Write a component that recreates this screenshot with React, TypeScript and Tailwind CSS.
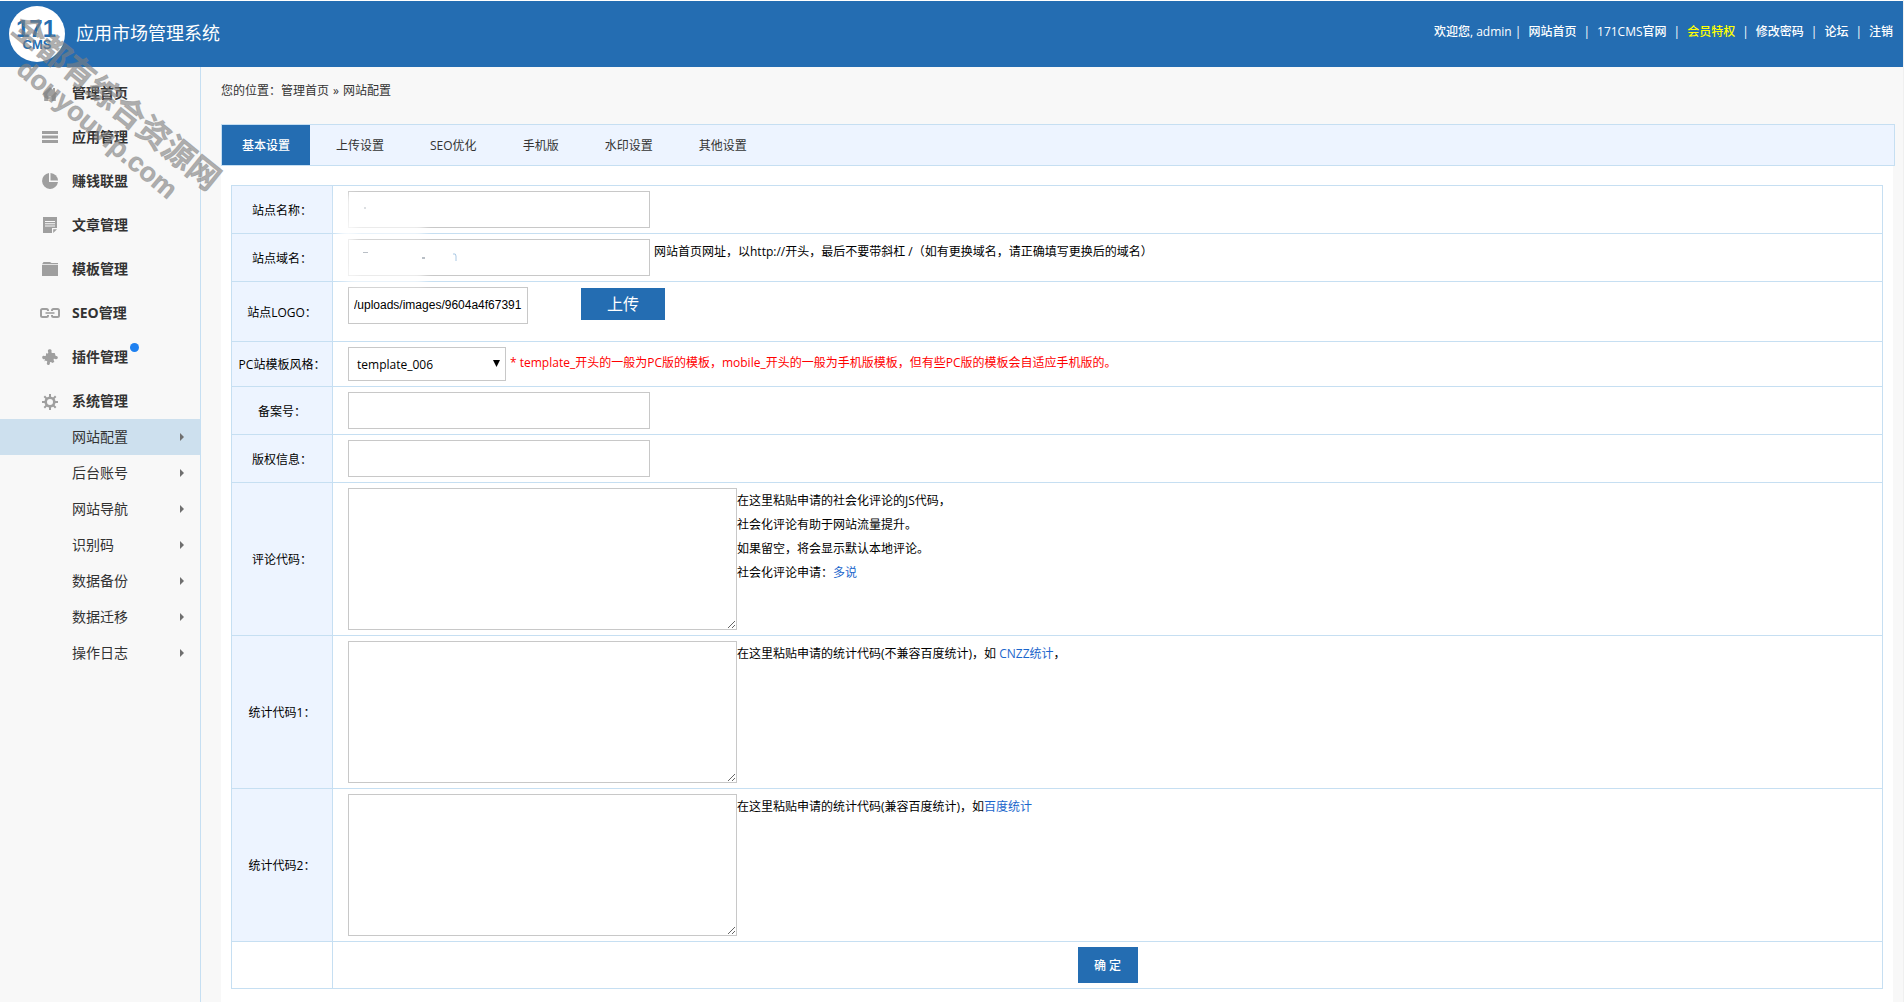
import { clsx } from 'clsx';
import { useState } from 'react';
import type { ReactNode } from 'react';

type MenuItem = {
    label: string;
    icon: ReactNode;
    badge?: boolean;
};

const HomeIcon = () => (
    <svg width="16" height="16" viewBox="0 0 16 16" fill="currentColor">
        <path d="M8 2 0 9.500h2.200V16h4.300v-4.500h3V16h4.300V9.500H16L13 6.700V3h-2v1.800z" />
    </svg>
);

const ListIcon = () => (
    <svg width="16" height="12" viewBox="0 0 16 12" fill="currentColor">
        <path d="M0 0h16v3H0zM0 4.500h16v3H0zM0 9h16v3H0z" />
    </svg>
);

const PieIcon = () => (
    <svg width="16" height="16" viewBox="0 0 16 16" fill="currentColor">
        <path d="M7 0a8 8 0 1 0 9 9H7z" />
        <path d="M8.500 0v7.500H16A8 8 0 0 0 8.500 0z" />
    </svg>
);

const NoteIcon = () => (
    <svg width="14" height="16" viewBox="0 0 14 16" fill="currentColor">
        <path
            fillRule="evenodd"
            d="M0 0h14v11H9v5H0zM2 4v1h10V4zM2 6.200v1h10v-1zM2 8.500v1h10v-1z"
        />
        <path d="M10.200 12.200H14L10.200 16z" />
    </svg>
);

const FolderIcon = () => (
    <svg width="16" height="14" viewBox="0 0 16 14" fill="currentColor">
        <path d="M0 2.200 1.500 0H8l1.500 1H16v1.200z" />
        <path d="M0 3h16v11H0z" />
    </svg>
);

const LinkIcon = () => (
    <svg
        width="20"
        height="10"
        viewBox="0 0 20 10"
        fill="none"
        stroke="currentColor"
        strokeWidth="2"
    >
        <path d="M8 3V2.500Q8 1 6.500 1h-4Q1 1 1 2.500v5Q1 9 2.500 9h4Q8 9 8 7.500V7M12 3V2.500Q12 1 13.500 1h4Q19 1 19 2.500v5Q19 9 17.500 9h-4Q12 9 12 7.500V7" />
        <path d="M5.500 5h9" strokeWidth="1.600" />
    </svg>
);

const PuzzleIcon = () => (
    <svg width="16" height="16" viewBox="0 0 16 16" fill="currentColor">
        <path d="M4 4.300c1 .3 2 .2 2.200-.4C6.400 3 5.600 2.300 6 1.300 6.500 0 9 0 9.500 1.300c.3.900-.3 1.600 0 2.200.5.700 1.800.6 3.200.5l1 3c.8-.3 1.700 0 2 .9.400 1.200-.5 2.600-1.900 2.300-.9-.2-1.300-.8-1.900-.4-.6.500-.1 1.700.5 3.300l-2.300 1c-.6-1.200-1.500-1.300-2-.8-.6.600.2 1.500-.6 2.300-1 .9-2.600.3-2.700-1 0-.9.700-1.500.4-2.200-.3-.6-1.200-.7-2.400-.5L2.300 13 3 9.900c-.7 0-1.300.6-2 .1C-.3 9.200 0 7 1.600 6.800c.9-.1 1.500.5 2 .2.500-.4.500-1.500.4-2.700z" />
    </svg>
);

const GearIcon = () => (
    <svg
        width="16"
        height="18"
        viewBox="0 -2 16 18"
        fill="none"
        stroke="currentColor"
    >
        <circle cx="8" cy="8" r="4.300" strokeWidth="2.600" />
        <path
            d="M8 0v3M8 13v3M0 8h3M13 8h3M2.300 2.300l2.300 2.300M11.400 11.400l2.300 2.300M2.300 13.700l2.300-2.300M11.400 4.600l2.300-2.300"
            strokeWidth="2"
        />
    </svg>
);

const menuItems: MenuItem[] = [
    { label: '管理首页', icon: <HomeIcon /> },
    { label: '应用管理', icon: <ListIcon /> },
    { label: '赚钱联盟', icon: <PieIcon /> },
    { label: '文章管理', icon: <NoteIcon /> },
    { label: '模板管理', icon: <FolderIcon /> },
    { label: 'SEO管理', icon: <LinkIcon /> },
    { label: '插件管理', icon: <PuzzleIcon />, badge: true },
    { label: '系统管理', icon: <GearIcon /> },
];

const subItems = [
    '网站配置',
    '后台账号',
    '网站导航',
    '识别码',
    '数据备份',
    '数据迁移',
    '操作日志',
];

const topLinks = [
    '网站首页',
    '171CMS官网',
    '会员特权',
    '修改密码',
    '论坛',
    '注销',
];

const tabs = [
    '基本设置',
    '上传设置',
    'SEO优化',
    '手机版',
    '水印设置',
    '其他设置',
];

const inputClass = 'h-[37px] border border-[#c8c8c8] bg-white px-[5px]';

function Logo() {
    return (
        <svg width="56" height="56" viewBox="0 0 56 56" className="shrink-0">
            <circle cx="28" cy="28" r="28" fill="#fff" />
            <g
                fill="#246db2"
                textAnchor="middle"
                fontFamily="'Liberation Sans', sans-serif"
                fontWeight="bold"
            >
                <text
                    x="27"
                    y="31"
                    fontSize="24"
                    fontFamily="'Liberation Sans Narrow', 'Liberation Sans', sans-serif"
                >
                    171
                </text>
                <text x="28" y="43" fontSize="13">
                    CMS
                </text>
            </g>
        </svg>
    );
}

function Watermark() {
    return (
        <svg
            width="240"
            height="210"
            viewBox="0 0 240 210"
            className="pointer-events-none absolute top-0 left-0"
            fill="#808080"
            fillOpacity="0.65"
            stroke="#808080"
            strokeOpacity="0.3"
            strokeWidth="0.800"
            fontWeight="bold"
        >
            <text
                transform="translate(10 31) rotate(39)"
                fontSize="32"
                fontFamily="'Noto Sans CJK SC', sans-serif"
            >
                全都有综合资源网
            </text>
            <text
                transform="translate(15 72) rotate(40)"
                fontSize="27"
                fontFamily="'Liberation Sans', sans-serif"
            >
                douyouvip.com
            </text>
        </svg>
    );
}

function Header() {
    return (
        <header className="flex h-[66px] items-center bg-[#246db2] pr-2.5 pl-[9px] text-white">
            <Logo />
            <h1 className="ml-[11px] pb-0.5 text-[18px]">应用市场管理系统</h1>
            <nav className="ml-auto flex items-center gap-[7px] pb-1 font-medium">
                <span>欢迎您, admin |</span>
                {topLinks.map((link, i) => (
                    <span key={link} className="flex gap-[7px]">
                        {i > 0 && <span>|</span>}
                        <a
                            href="#"
                            className={clsx(link === '会员特权' && 'text-[#ffff00]')}
                        >
                            {link}
                        </a>
                    </span>
                ))}
            </nav>
        </header>
    );
}

function Sidebar() {
    return (
        <aside className="w-[201px] shrink-0 border-r border-[#c6dff2] text-sm text-[#333]">
            {menuItems.map((item) => (
                <a
                    key={item.label}
                    href="#"
                    className="flex h-11 items-center pt-2 pl-10 font-bold"
                >
                    <span className="flex w-5 justify-center text-[#9f9f9f]">
                        {item.icon}
                    </span>
                    <span className="relative ml-3">
                        {item.label}
                        {item.badge && (
                            <span className="absolute -top-1 -right-[11px] h-[9px] w-[9px] rounded-full bg-[#1e80f0]" />
                        )}
                    </span>
                </a>
            ))}
            {subItems.map((item, i) => (
                <a
                    key={item}
                    href="#"
                    className={clsx(
                        'flex h-9 items-center justify-between pr-4 pl-[72px]',
                        i === 0 && 'bg-[#cde0ee]',
                    )}
                >
                    {item}
                    <svg width="4" height="8" viewBox="0 0 4 8" fill="#6f6f6f">
                        <path d="M0 0l4 4-4 4z" />
                    </svg>
                </a>
            ))}
        </aside>
    );
}

function Row({
    label,
    htmlFor,
    className = 'pb-[5px] pl-[15px]',
    children,
}: {
    label?: string;
    htmlFor?: string;
    className?: string;
    children: ReactNode;
}) {
    return (
        <div className="flex border-t border-[#c6dff2]">
            <div
                className={clsx(
                    'flex w-[101px] shrink-0 items-center justify-center border-r border-[#c6dff2] pt-0.5',
                    label && 'bg-[#edf4ff]',
                )}
            >
                {label && <label htmlFor={htmlFor}>{label}</label>}
            </div>
            <div className={clsx('flex flex-1 items-start pt-[5px]', className)}>
                {children}
            </div>
        </div>
    );
}

function CodeRow({
    label,
    id,
    children,
}: {
    label: string;
    id: string;
    children: ReactNode;
}) {
    return (
        <Row label={label} htmlFor={id}>
            <textarea
                id={id}
                className="h-[142px] w-[389px] resize border border-[#c8c8c8] bg-white p-[5px]"
            />
            <div className="pt-px leading-6">{children}</div>
        </Row>
    );
}

// Soft smear over the site name and domain, with the specks left under it
function Smudge() {
    return (
        <svg
            width="140"
            height="110"
            viewBox="0 0 140 110"
            className="pointer-events-none absolute top-0 left-[92px]"
        >
            <filter id="soft" x="-50%" y="-50%" width="200%" height="200%">
                <feGaussianBlur stdDeviation="4" />
            </filter>
            <g fill="#fff" fillOpacity="0.75" filter="url(#soft)">
                <rect x="14" y="10" width="16" height="84" />
                <rect x="24" y="38" width="76" height="14" />
                <rect x="24" y="86" width="76" height="14" />
            </g>
            <g fill="#8a94a0" fillOpacity="0.6">
                <rect x="40" y="22" width="2" height="2" fillOpacity="0.3" />
                <rect x="39" y="67" width="5" height="1" />
                <rect x="98" y="72" width="3" height="2" />
            </g>
            <path d="M129 69q3-1 3 2v5" fill="none" stroke="#a9c8e4" />
        </svg>
    );
}

function SettingsForm() {
    return (
        <form className="relative border-x border-b border-[#c6dff2]">
            <Row label="站点名称：" htmlFor="site-name">
                <input id="site-name" type="text" className={clsx(inputClass, 'w-[302px]')} />
            </Row>
            <Row label="站点域名：" htmlFor="site-url">
                <input id="site-url" type="text" className={clsx(inputClass, 'w-[302px]')} />
                <p className="ml-1 pt-px leading-6">
                    网站首页网址，以http://开头，最后不要带斜杠 /（如有更换域名，请正确填写更换后的域名）
                </p>
            </Row>
            <Row label="站点LOGO：" htmlFor="site-logo" className="pb-[17px] pl-[15px]">
                <input
                    id="site-logo"
                    type="text"
                    defaultValue="/uploads/images/9604a4f67391"
                    className={clsx(
                        inputClass,
                        "w-[180px] pb-0.5 font-['Liberation_Sans',sans-serif]",
                    )}
                />
                <button
                    type="button"
                    className="mt-px ml-[53px] h-8 w-[84px] bg-[#246db2] text-base text-white"
                >
                    上传
                </button>
            </Row>
            <Row label="PC站模板风格：" htmlFor="template">
                <div className="relative">
                    <select
                        id="template"
                        className="h-[34px] w-[158px] appearance-none border border-[#c8c8c8] bg-white px-2 pt-0.5"
                    >
                        <option>template_006</option>
                    </select>
                    <svg
                        width="7"
                        height="7"
                        viewBox="0 0 7 7"
                        className="pointer-events-none absolute top-[13px] right-[6px]"
                    >
                        <path d="M0 0h7L3.500 7z" />
                    </svg>
                </div>
                <p className="ml-1 leading-8 text-[#ff0000]">
                    * template_开头的一般为PC版的模板，mobile_开头的一般为手机版模板，但有些PC版的模板会自适应手机版的。
                </p>
            </Row>
            <Row label="备案号：" htmlFor="icp">
                <input id="icp" type="text" className={clsx(inputClass, 'w-[302px]')} />
            </Row>
            <Row label="版权信息：" htmlFor="copyright">
                <input id="copyright" type="text" className={clsx(inputClass, 'w-[302px]')} />
            </Row>
            <CodeRow label="评论代码：" id="comment-code">
                <p>在这里粘贴申请的社会化评论的JS代码，</p>
                <p>社会化评论有助于网站流量提升。</p>
                <p>如果留空，将会显示默认本地评论。</p>
                <p>
                    社会化评论申请：
                    <a href="#" className="text-[#1a66cc]">
                        多说
                    </a>
                </p>
            </CodeRow>
            <CodeRow label="统计代码1：" id="stats-code-1">
                在这里粘贴申请的统计代码(不兼容百度统计)，如{' '}
                <a href="#" className="text-[#1a66cc]">
                    CNZZ统计
                </a>
                ，
            </CodeRow>
            <CodeRow label="统计代码2：" id="stats-code-2">
                在这里粘贴申请的统计代码(兼容百度统计)，如
                <a href="#" className="text-[#1a66cc]">
                    百度统计
                </a>
            </CodeRow>
            <Row className="justify-center pb-[5px]">
                <button
                    type="submit"
                    className="h-9 w-[60px] bg-[#246db2] pt-0.5 font-medium text-white"
                >
                    确 定
                </button>
            </Row>
            <Smudge />
        </form>
    );
}

export default function App() {
    const [activeTab, setActiveTab] = useState(tabs[0]);

    return (
        <div className="relative flex min-h-screen flex-col border-r border-[#f0f0f0] bg-[#f8f8f8] font-['Open_Sans','Noto_Sans_CJK_SC',sans-serif] text-xs text-black">
            <div className="h-px bg-white" />
            <Header />
            <div className="flex flex-1">
                <Sidebar />
                <main className="mr-2 ml-5 flex min-w-0 flex-1 flex-col">
                    <p className="pt-3 pb-[21px] leading-6 text-[#333]">
                        您的位置：<a href="#">管理首页</a>
                        <span className="mx-1">»</span>
                        <a href="#">网站配置</a>
                    </p>
                    <div className="flex h-[42px] gap-1.5 border border-[#c6dff2] bg-[#edf4ff]">
                        {tabs.map((tab) => (
                            <button
                                key={tab}
                                type="button"
                                onClick={() => setActiveTab(tab)}
                                className={clsx(
                                    'px-5 pt-0.5',
                                    tab === activeTab
                                        ? 'bg-[#246db2] font-medium text-white'
                                        : 'text-[#333]',
                                )}
                            >
                                {tab}
                            </button>
                        ))}
                    </div>
                    <div className="mr-0.5 flex-1 bg-white px-2.5 pt-[19px] pb-3">
                        <SettingsForm />
                    </div>
                </main>
            </div>
            <Watermark />
        </div>
    );
}
